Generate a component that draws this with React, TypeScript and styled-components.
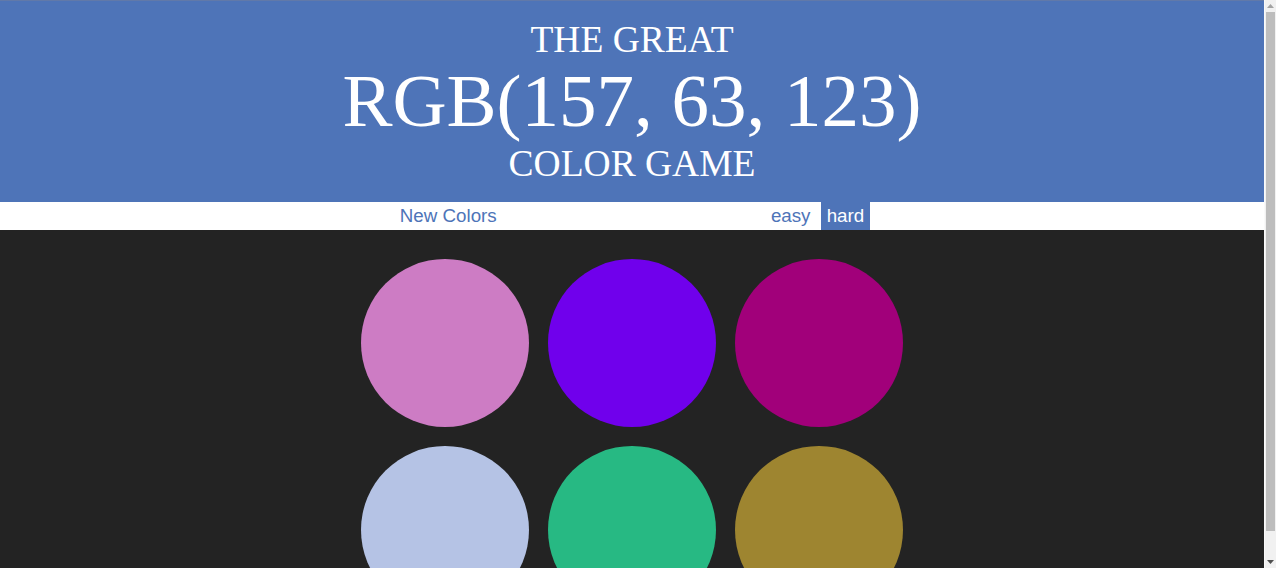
import React from "react";
import styled, { createGlobalStyle } from "styled-components";

const Global = createGlobalStyle`
  html, body { margin: 0; padding: 0; }
  body { background: #232323; font-family: "Liberation Sans", Arial, sans-serif; }
`;

const Layout = styled.div`
  display: flex;
  align-items: flex-start;
`;

const Main = styled.main`
  flex: 1;
  min-width: 0;
`;

const ScrollBar = styled.div`
  position: sticky;
  top: 0;
  width: 12px;
  height: 100vh;
  flex: none;
  display: flex;
  flex-direction: column;
  background: #f1f1f1;
  box-sizing: border-box;
  border-left: 1px solid #fafafa;
`;

const ArrowBtn = styled.div`
  height: 12px;
  flex: none;
  display: flex;
  align-items: center;
  justify-content: center;
  background: #f1f1f1;
`;

const Thumb = styled.div`
  height: 519px;
  flex: none;
  margin: 0 1px;
  background: #bdbdbd;
`;

const Track = styled.div`
  flex: 1;
`;

const Header = styled.h1`
  margin: 0;
  padding: 18px 0 18px;
  border-top: 1px solid #6179a9;
  background: #4e74b8;
  color: #ffffff;
  text-align: center;
  font-family: "Liberation Serif", "Times New Roman", serif;
  font-weight: 400;
  line-height: 1.1;
  font-size: 37.5px;
`;

const Big = styled.span`
  display: block;
  font-size: 75px;
`;

const Stripe = styled.div`
  display: flex;
  justify-content: center;
  align-items: stretch;
  gap: 5.2px;
  height: 28px;
  background: #ffffff;
`;

const Btn = styled.button<{ $active?: boolean }>`
  border: none;
  margin: 0;
  padding: 0 5.5px;
  font-family: "Liberation Sans", Arial, sans-serif;
  font-size: 18.75px;
  line-height: 28px;
  cursor: pointer;
  background: ${(p) => (p.$active ? "#4e74b8" : "transparent")};
  color: ${(p) => (p.$active ? "#ffffff" : "#4e74b8")};
`;

const Message = styled.span`
  width: 20%;
`;

const Board = styled.div`
  width: 560px;
  margin: 20px auto;
  padding: 9px;
  box-sizing: border-box;
  display: grid;
  grid-template-columns: repeat(3, 168px);
  gap: 19px;
  justify-content: center;
`;

const Circle = styled.div<{ $c: string }>`
  width: 168px;
  height: 168px;
  border-radius: 50%;
  background: ${(p) => p.$c};
`;

const colors = [
  "rgb(205, 124, 196)",
  "rgb(112, 0, 236)",
  "rgb(161, 0, 122)",
  "rgb(181, 195, 229)",
  "rgb(39, 185, 131)",
  "rgb(158, 133, 48)",
];

function App() {
  return (
    <>
      <Global />
      <Layout>
        <Main>
          <Header>
            THE GREAT
            <Big>RGB(157, 63, 123)</Big>
            COLOR GAME
          </Header>
          <Stripe>
            <Btn>New Colors</Btn>
            <Message />
            <Btn>easy</Btn>
            <Btn $active>hard</Btn>
          </Stripe>
          <Board>
            {colors.map((c) => (
              <Circle key={c} $c={c} />
            ))}
          </Board>
        </Main>
        <ScrollBar>
          <ArrowBtn>
            <svg width="7" height="4" viewBox="0 0 7 4">
              <path d="M0 4 L3.5 0 L7 4 Z" fill="#a3a3a3" />
            </svg>
          </ArrowBtn>
          <Thumb />
          <Track />
          <ArrowBtn>
            <svg width="7" height="4" viewBox="0 0 7 4">
              <path d="M0 0 L3.5 4 L7 0 Z" fill="#505050" />
            </svg>
          </ArrowBtn>
        </ScrollBar>
      </Layout>
    </>
  );
}

export default App;
